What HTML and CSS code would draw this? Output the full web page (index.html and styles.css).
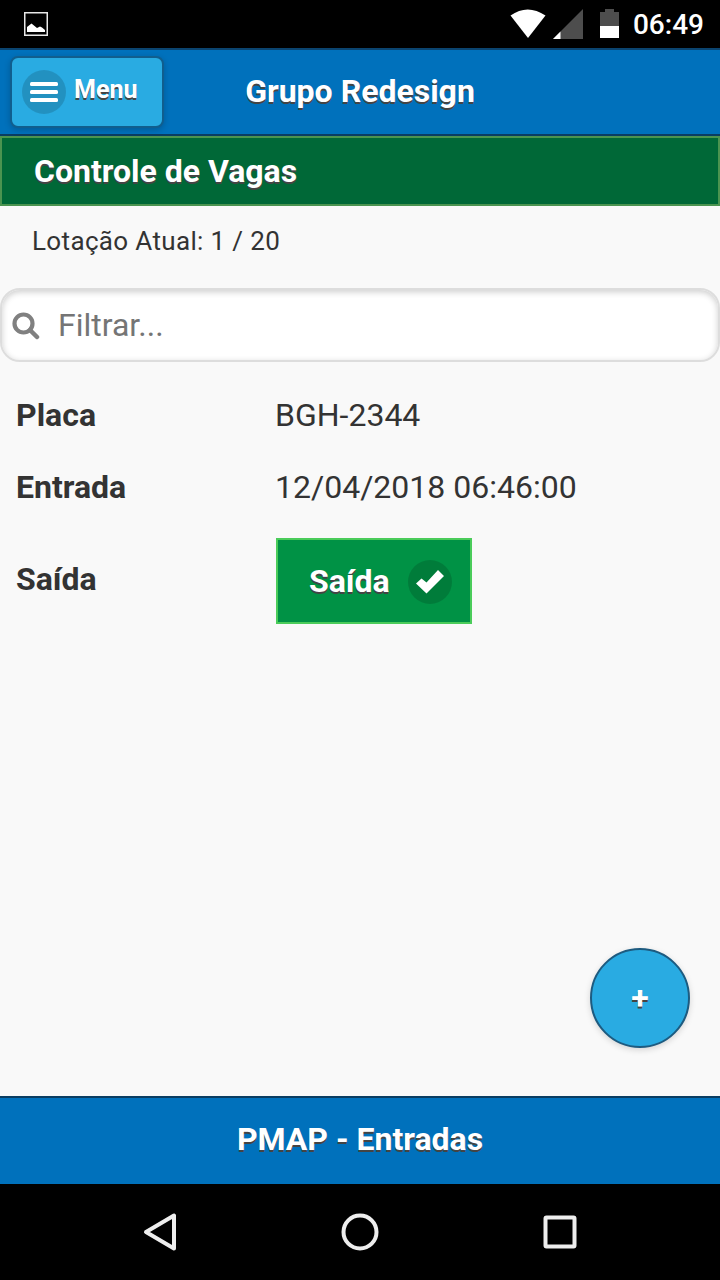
FILE: index.html
```html
<!DOCTYPE html>
<html lang="pt-BR">
<head>
    <meta charset="UTF-8">
    <meta name="viewport" content="width=device-width, initial-scale=1.0">
    <title>Grupo Redesign</title>
    <link rel="stylesheet" href="styles.css">
</head>
<body>
    <div class="status-bar">
        <svg class="picture-icon" width="24" height="24" viewBox="0 0 24 24">
            <rect x="0.75" y="0.75" width="22.5" height="22.5" fill="none" stroke="#e8e8e8" stroke-width="1.5"/>
            <path d="M3 20V15L7.500 11.500L13 16L16 14.500L18 15.500L21 18V20Z" fill="#fff"/>
        </svg>
        <svg class="signal-icons" width="110" height="32" viewBox="0 0 110 32">
            <path d="M0.500 7.500Q17.500 -4.500 35.500 7.500L18 30Z" fill="#fff"/>
            <path d="M73 1V31H43Z" fill="#4d4d4d"/>
            <path d="M50.500 23.500V31H43Z" fill="#fff"/>
            <path d="M90 4H95V1H104V4H109V18H90Z" fill="#4d4d4d"/>
            <path d="M90 18H109V30H90Z" fill="#fff"/>
        </svg>
        <span class="clock">06:49</span>
    </div>

    <header class="header">
        <button class="menu-btn">
            <span class="icon-disc">
                <svg width="28" height="20" viewBox="0 0 28 20" fill="#fff">
                    <rect width="28" height="4" rx="1.500"/>
                    <rect y="8" width="28" height="4" rx="1.500"/>
                    <rect y="16" width="28" height="4" rx="1.500"/>
                </svg>
            </span>
            <span>Menu</span>
        </button>
        <h1>Grupo Redesign</h1>
    </header>

    <main class="content">
        <h2 class="section-title">Controle de Vagas</h2>
        <p class="capacity">Lotação Atual: 1 / 20</p>
        <div class="search">
            <svg width="28" height="28" viewBox="0 0 28 28" fill="none" stroke="#808080">
                <circle cx="11.500" cy="11.500" r="9" stroke-width="4.200"/>
                <path d="M18 18L25 25" stroke-width="4.500" stroke-linecap="round"/>
            </svg>
            <input type="text" placeholder="Filtrar...">
        </div>
        <div class="entry">
            <div class="row">
                <b>Placa</b>
                <span>BGH-2344</span>
            </div>
            <div class="row">
                <b>Entrada</b>
                <span>12/04/2018 06:46:00</span>
            </div>
            <div class="row row-exit">
                <b>Saída</b>
                <button class="exit-btn">
                    <span>Saída</span>
                    <span class="icon-disc">
                        <svg width="28" height="24" viewBox="0 0 28 24">
                            <path d="M22 0L28 6L10.500 23.500L0 13.500L5.500 8.500L10.500 12.500Z" fill="#fff"/>
                        </svg>
                    </span>
                </button>
            </div>
        </div>
        <button class="add-btn">+</button>
    </main>

    <footer class="footer">PMAP - Entradas</footer>

    <nav class="nav-bar">
        <svg width="40" height="40" viewBox="0 0 40 40">
            <path d="M34 3.500V36.500L6 20Z"/>
        </svg>
        <svg width="40" height="40" viewBox="0 0 40 40">
            <circle cx="20" cy="20" r="16.500"/>
        </svg>
        <svg width="40" height="40" viewBox="0 0 40 40">
            <rect x="5.500" y="5.500" width="29" height="29" rx="1"/>
        </svg>
    </nav>
</body>
</html>
```

FILE: styles.css
```css
* {
    box-sizing: border-box;
}
body {
    margin: 0;
    height: 1280px;
    display: flex;
    flex-direction: column;
    background-color: #f9f9f9;
    color: #333;
    font-family: Roboto, sans-serif;
    font-size: 32px;
    line-height: 40px;
    overflow: hidden;
}
h1, h2, p {
    margin: 0;
    font-size: inherit;
}
button {
    font: inherit;
    font-weight: bold;
    color: white;
    text-shadow: 0 2px 0 #444;
    cursor: pointer;
}
.status-bar {
    height: 48px;
    flex: none;
    display: flex;
    align-items: center;
    padding: 0 16px 0 24px;
    background-color: #000;
    color: white;
}
.picture-icon {
    margin-right: auto;
}
.signal-icons {
    width: 110px;
    margin-right: 13px;
}
.clock {
    font-size: 28px;
    font-weight: 500;
    padding-top: 2px;
}
.header {
    height: 88px;
    flex: none;
    display: grid;
    grid-template-columns: 154px 1fr 154px;
    align-items: center;
    padding: 0 10px;
    background-color: #0071bc;
    border-top: 2px solid #0a4470;
    border-bottom: 2px solid #0a3d62;
    color: white;
    text-align: center;
    text-shadow: 0 2px 0 #444;
}
.header h1 {
    padding-bottom: 2px;
}
.menu-btn {
    height: 72px;
    display: flex;
    align-items: center;
    gap: 8px;
    padding: 0 10px;
    background-color: #29abe2;
    border: 2px solid #105e8e;
    border-radius: 8px;
    box-shadow: 0 2px 6px rgba(0,0,0,0.2);
    font-size: 25px;
    line-height: 36px;
}
.menu-btn span:last-child {
    padding-bottom: 5px;
}
.icon-disc {
    width: 44px;
    height: 44px;
    flex: none;
    display: flex;
    align-items: center;
    justify-content: center;
    border-radius: 50%;
    background-color: rgba(0,0,0,0.15);
}
.content {
    flex: 1;
    display: flex;
    flex-direction: column;
}
.section-title {
    height: 70px;
    padding: 13px 32px;
    background-color: #006837;
    border: 2px solid #4b9450;
    color: white;
    text-shadow: 0 2px 0 #444;
}
.capacity {
    padding: 15px 32px 27px;
    font-size: 26px;
    letter-spacing: 0.35px;
}
.search {
    height: 74px;
    display: flex;
    align-items: center;
    gap: 18px;
    padding: 0 10px;
    background-color: white;
    border: 2px solid #ddd;
    border-radius: 20px;
    box-shadow: inset 0 2px 6px rgba(0,0,0,0.2);
}
.search svg {
    margin-top: 2px;
}
.search input {
    flex: 1;
    padding: 0;
    border: none;
    outline: none;
    background: none;
    font: inherit;
    color: #333;
}
.search input::placeholder {
    color: #757575;
}
.entry {
    padding: 17px 16px;
}
.row {
    height: 72px;
    display: grid;
    grid-template-columns: 260px 1fr;
    align-items: center;
}
.row span {
    margin-left: -1px;
}
.row-exit {
    height: 116px;
}
.row-exit b {
    padding-bottom: 4px;
}
.exit-btn {
    width: 196px;
    height: 86px;
    display: flex;
    align-items: center;
    justify-content: space-between;
    padding: 0 18px 0 32px;
    background-color: #009245;
    border: 2px solid #4bcc5a;
}
.exit-btn .icon-disc {
    margin-top: 2px;
}
.add-btn {
    width: 100px;
    height: 100px;
    margin: auto 30px 48px auto;
    padding: 0;
    background-color: #29abe2;
    border: 2px solid #1d5b80;
    border-radius: 50%;
    box-shadow: 0 2px 6px rgba(0,0,0,0.15);
}
.footer {
    height: 88px;
    flex: none;
    padding-top: 21px;
    background-color: #0071bc;
    border-top: 2px solid #0a3d62;
    color: white;
    font-weight: bold;
    text-align: center;
    text-shadow: 0 2px 0 #444;
}
.nav-bar {
    height: 96px;
    flex: none;
    display: flex;
    align-items: center;
    justify-content: center;
    gap: 160px;
    background-color: #000;
}
.nav-bar svg {
    fill: none;
    stroke: #eee;
    stroke-width: 4;
    stroke-linejoin: round;
}
```
